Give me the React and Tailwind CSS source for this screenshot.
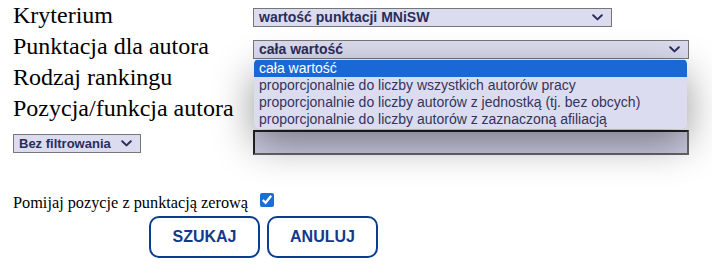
import React from "react";

function Chevron({ className = "" }) {
  return (
    <svg width="11" height="7" viewBox="0 0 11 7" className={"shrink-0 " + className}>
      <path d="M1.2 1.2 L5.5 5.4 L9.8 1.2" fill="none" stroke="#2a2d5a" strokeWidth="2" strokeLinecap="round" strokeLinejoin="round" />
    </svg>
  );
}

function FakeSelect({ value, className = "" }) {
  return (
    <div
      className={
        "flex h-[19px] items-center justify-between border border-[#767676] bg-[#dcdcf0] pl-[5px] pr-[8px] font-bold leading-[17px] text-[#2a2d5a] " +
        className
      }
      style={{ fontFamily: '"Liberation Sans", Arial, sans-serif' }}
    >
      <span className="whitespace-nowrap">{value}</span>
      <Chevron />
    </div>
  );
}

const options = [
  "cała wartość",
  "proporcjonalnie do liczby wszystkich autorów pracy",
  "proporcjonalnie do liczby autorów z jednostką (tj. bez obcych)",
  "proporcjonalnie do liczby autorów z zaznaczoną afiliacją",
];

export default function App() {
  const serif = { fontFamily: '"Liberation Serif", "Times New Roman", serif' };
  return (
    <div className="h-[271px] w-[712px] overflow-hidden bg-white pl-[13px]" style={serif}>
      <div className="flex h-[31px] text-[24px] leading-[31px] text-black">
        <div className="w-[240px] shrink-0">Kryterium</div>
        <FakeSelect value="wartość punktacji MNiSW" className="mt-[8px] w-[359px] text-[14px]" />
      </div>
      <div className="flex h-[31px] text-[24px] leading-[31px] text-black">
        <div className="w-[240px] shrink-0">Punktacja dla autora</div>
        <div className="relative mt-[9px] w-[436px]">
          <FakeSelect value="cała wartość" className="w-[436px] text-[14px]" />
          <div
            className="absolute left-[1px] top-[19px] z-10 w-[433px] overflow-hidden rounded-[5px] bg-[#dcdcf0] py-[1px] text-[14px] leading-[17px] text-[#34345a] shadow-[0_14px_40px_rgba(0,0,0,0.42)]"
            style={{ fontFamily: '"Liberation Sans", Arial, sans-serif' }}
          >
            {options.map((o, i) => (
              <div
                key={o}
                className={
                  "h-[17px] whitespace-nowrap px-[5px] " +
                  (i === 0 ? "bg-[#1a68d6] text-white" : "")
                }
              >
                {o}
              </div>
            ))}
          </div>
        </div>
      </div>
      <div className="flex h-[31px] text-[24px] leading-[31px] text-black">
        <div className="w-[240px] shrink-0">Rodzaj rankingu</div>
      </div>
      <div className="flex h-[31px] text-[24px] leading-[31px] text-black">
        <div className="w-[240px] shrink-0">Pozycja/funkcja autora</div>
      </div>
      <div className="mt-[6px] flex items-start">
        <div className="w-[240px] shrink-0 pt-[4px]">
          <FakeSelect value="Bez filtrowania" className="w-[128px] gap-[5px] pr-[6px] text-[13px]" />
        </div>
        <div className="h-[25px] w-[436px] border-2 border-b-[#666] border-l-[#222] border-r-[#666] border-t-[#222] bg-[#ccccE2]" />
      </div>
      <div className="mt-[38px] flex items-center text-[16.3px] leading-[20px] text-black">
        <span>Pomijaj pozycje z punktacją zerową</span>
        <input
          type="checkbox"
          defaultChecked
          className="ml-[12px] mb-[6px] h-[14px] w-[14px] accent-[#1a6ed8]"
        />
      </div>
      <div
        className="ml-[136px] mt-[3px] flex gap-[7px] text-[16px] font-bold text-[#0f3a8f]"
        style={{ fontFamily: '"Liberation Sans", Arial, sans-serif' }}
      >
        <button className="h-[42px] w-[111px] rounded-[10px] border-2 border-[#0b3d91] bg-white">SZUKAJ</button>
        <button className="h-[42px] w-[111px] rounded-[10px] border-2 border-[#0b3d91] bg-white">ANULUJ</button>
      </div>
    </div>
  );
}
